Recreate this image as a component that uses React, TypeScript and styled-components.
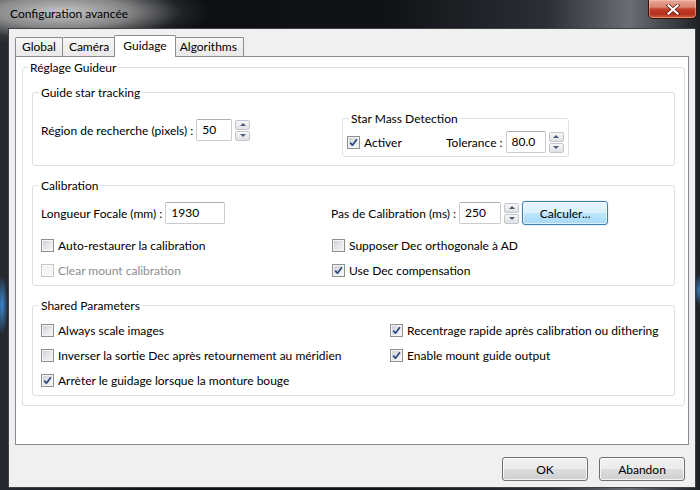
import React from "react";
import styled, { createGlobalStyle, css } from "styled-components";

const GlobalStyle = createGlobalStyle`
  html, body { margin: 0; padding: 0; background: #111317; }
  body {
    width: 700px; height: 490px; overflow: hidden;
    font-family: "Segoe UI", Lato, "Noto Sans", sans-serif;
    font-size: 12px; color: #000;
  }
  * { box-sizing: border-box; }
`;

const Window = styled.div`
  width: 700px;
  height: 490px;
  display: flex;
  flex-direction: column;
  background:
    radial-gradient(ellipse 150px 34px at 62px 12px, rgba(205,205,205,0.95) 0%, rgba(170,170,170,0.75) 45%, rgba(90,90,90,0.25) 80%, transparent 100%),
    radial-gradient(ellipse 6px 30px at 2px 305px, rgba(60,140,220,0.95), transparent),
    radial-gradient(ellipse 5px 16px at 699px 290px, rgba(60,140,220,0.8), transparent),
    linear-gradient(to right, #26292e 0%, #0d0f12 25%, #101216 55%, #2b2e33 78%, #6a6d72 90%, #34373c 97%, #1d1f23 100%);
`;

const TitleBar = styled.div`
  height: 28px;
  display: flex;
  align-items: flex-start;
  flex-shrink: 0;
`;

const TitleText = styled.div`
  margin: 6px 0 0 10px;
  font-size: 12px;
  line-height: 16px;
  color: #000;
`;

const CloseButton = styled.div`
  margin: 0 3px 0 auto;
  width: 49px;
  height: 19px;
  border: 1px solid #3b1008;
  border-top: none;
  border-radius: 0 0 5px 5px;
  background: linear-gradient(#e9a898 0%, #d98471 40%, #c1402a 50%, #b3301b 78%, #d4603f 100%);
  box-shadow: inset 0 0 0 1px rgba(255,210,200,0.45);
  display: flex;
  align-items: center;
  justify-content: center;
`;

const Client = styled.div`
  flex: 1;
  margin: 0 4px 2px 8px;
  border: 1px solid #3e4146;
  background: #f0f0f0;
  padding: 6px 6px 0 6px;
  display: flex;
  flex-direction: column;
`;

const TabStrip = styled.div`
  display: flex;
  align-items: flex-end;
  height: 21px;
  padding-left: 1px;
  position: relative;
  z-index: 1;
`;

const Tab = styled.div<{ $active?: boolean }>`
  height: 19px;
  padding: 0 6px;
  border: 1px solid #898c95;
  border-bottom: none;
  border-radius: 2px 2px 0 0;
  margin-left: -1px;
  background: linear-gradient(#f6f6f6, #e9e9e9);
  line-height: 17px;
  white-space: nowrap;
  ${(p) =>
    p.$active &&
    css`
      height: 22px;
      margin: 0 -2px -1px -2px;
      padding: 0 8px;
      background: #fff;
      line-height: 19px;
      position: relative;
      z-index: 2;
    `}
`;

const TabPanel = styled.div`
  height: 389px;
  border: 1px solid #898c95;
  background: #fff;
  padding: 3px 3px 0 6px;
`;

const Group = styled.fieldset<{ $pad: string; $width?: number }>`
  margin: 0;
  min-width: 0;
  border: 1px solid #dcdfe3;
  border-radius: 3px;
  padding: ${(p) => p.$pad};
  ${(p) => p.$width && css`width: ${p.$width}px;`}
`;

const Legend = styled.legend<{ $offset: number }>`
  padding: 0 2px;
  margin-left: ${(p) => p.$offset}px;
  line-height: 15px;
  font-size: 12px;
`;

const Stack = styled.div`
  display: flex;
  flex-direction: column;
  gap: 12px;
`;

const TrackingGrid = styled.div`
  display: grid;
  grid-template-columns: 301px auto;
  align-items: start;
`;

const FieldRow = styled.div<{ $mt?: number }>`
  display: flex;
  align-items: center;
  height: 22px;
  margin-top: ${(p) => p.$mt ?? 0}px;
`;

const Label = styled.span<{ $width?: number }>`
  white-space: nowrap;
  margin-right: 3px;
  ${(p) => p.$width && css`width: ${p.$width}px;`}
`;

const Field = styled.div<{ $w: number }>`
  width: ${(p) => p.$w}px;
  height: 22px;
  border: 1px solid #c9ccd1;
  border-top-color: #abadb3;
  border-radius: 2px;
  background: #fff;
  padding-left: 5px;
  line-height: 20px;
`;

const Spin = styled.div`
  display: flex;
  flex-direction: column;
  gap: 1px;
  margin-left: 3px;
  width: 15px;
`;

const SpinHalf = styled.div<{ $down?: boolean }>`
  height: 10px;
  border: 1px solid #c3c7cd;
  border-radius: 2px;
  background: linear-gradient(#f7f7f7, #dfe1e4);
  display: flex;
  align-items: center;
  justify-content: center;
  &::after {
    content: "";
    border-left: 3px solid transparent;
    border-right: 3px solid transparent;
    ${(p) =>
      p.$down
        ? css`border-top: 3px solid #4b5a78;`
        : css`border-bottom: 3px solid #4b5a78;`}
  }
`;

const CheckItem = styled.div<{ $width?: number; $disabled?: boolean }>`
  display: flex;
  align-items: center;
  gap: 4px;
  white-space: nowrap;
  color: ${(p) => (p.$disabled ? "#8d8d8d" : "#000")};
  ${(p) => p.$width && css`width: ${p.$width}px;`}
`;

const Box = styled.span<{ $disabled?: boolean }>`
  width: 13px;
  height: 13px;
  flex-shrink: 0;
  border: 1px solid ${(p) => (p.$disabled ? "#c5c5c5" : "#8e8f8f")};
  background: ${(p) =>
    p.$disabled
      ? "#f4f4f4"
      : "linear-gradient(135deg, #c9ccd2 0%, #e6e8eb 55%, #f9f9f9 100%)"};
  box-shadow: inset 0 0 0 1px ${(p) => (p.$disabled ? "#fbfbfb" : "#f4f4f4")};
  display: flex;
  align-items: center;
  justify-content: center;
`;

const CalGrid = styled.div<{ $cols: string }>`
  display: grid;
  grid-template-columns: ${(p) => p.$cols};
  grid-auto-rows: 25px;
  align-items: center;
`;

const CalTop = styled.div`
  display: grid;
  grid-template-columns: 290px auto;
  margin-bottom: 9px;
`;

const Button = styled.div<{ $focus?: boolean; $w: number }>`
  width: ${(p) => p.$w}px;
  height: 24px;
  border: 1px solid #707070;
  border-radius: 3px;
  background: linear-gradient(#f2f2f2 0%, #ebebeb 50%, #dddddd 50%, #cfcfcf 100%);
  box-shadow: inset 0 0 0 1px rgba(255,255,255,0.75);
  display: flex;
  align-items: center;
  justify-content: center;
  ${(p) =>
    p.$focus &&
    css`
      border-color: #3c7fb1;
      background: linear-gradient(#eaf6fd 0%, #d9f0fc 50%, #bee6fd 50%, #a7d9f5 100%);
      box-shadow: inset 0 0 0 1px rgba(255,255,255,0.6), 0 0 2px rgba(60,127,177,0.35);
    `}
`;

const Footer = styled.div`
  display: flex;
  justify-content: flex-end;
  gap: 11px;
  margin-top: 12px;
  padding-right: 4px;
`;

const Check = ({ on }: { on?: boolean }) =>
  on ? (
    <svg width="9" height="9" viewBox="0 0 9 9">
      <path d="M1.2 4.6 L3.4 7.2 L7.9 1.2" fill="none" stroke="#2c4680" strokeWidth="1.7" strokeLinejoin="round" />
    </svg>
  ) : null;

const CheckBox = ({
  label,
  on,
  disabled,
  width,
}: {
  label: string;
  on?: boolean;
  disabled?: boolean;
  width?: number;
}) => (
  <CheckItem $disabled={disabled} $width={width}>
    <Box $disabled={disabled}>
      <Check on={on} />
    </Box>
    {label}
  </CheckItem>
);

const Spinner = () => (
  <Spin>
    <SpinHalf />
    <SpinHalf $down />
  </Spin>
);

export default function App() {
  return (
    <Window>
      <GlobalStyle />
      <TitleBar>
        <TitleText>Configuration avancée</TitleText>
        <CloseButton>
          <svg width="14" height="11" viewBox="0 0 14 11">
            <path d="M2.5 1.5 L11.5 9.5 M11.5 1.5 L2.5 9.5" stroke="#5a1a10" strokeWidth="3.6" strokeLinecap="square" />
            <path d="M2.5 1.5 L11.5 9.5 M11.5 1.5 L2.5 9.5" stroke="#fff" strokeWidth="2.2" strokeLinecap="square" />
          </svg>
        </CloseButton>
      </TitleBar>
      <Client>
        <TabStrip>
          <Tab>Global</Tab>
          <Tab>Caméra</Tab>
          <Tab $active>Guidage</Tab>
          <Tab>Algorithms</Tab>
        </TabStrip>
        <TabPanel>
          <Group $pad="10px 9px 9px 9px">
            <Legend $offset={-4}>Réglage Guideur</Legend>
            <Stack>
              <Group $pad="11px 8px 8px 8px">
                <Legend $offset={-2}>Guide star tracking</Legend>
                <TrackingGrid>
                  <FieldRow $mt={8}>
                    <Label>Région de recherche (pixels) :</Label>
                    <Field $w={36}>50</Field>
                    <Spinner />
                  </FieldRow>
                  <Group $pad="5px 4px 3px 4px" $width={227}>
                    <Legend $offset={2}>Star Mass Detection</Legend>
                    <FieldRow>
                      <CheckBox label="Activer" on width={99} />
                      <Label>Tolerance :</Label>
                      <Field $w={40}>80.0</Field>
                      <Spinner />
                    </FieldRow>
                  </Group>
                </TrackingGrid>
              </Group>

              <Group $pad="9px 8px 2px 8px">
                <Legend $offset={-2}>Calibration</Legend>
                <CalTop>
                  <FieldRow>
                    <Label>Longueur Focale (mm) :</Label>
                    <Field $w={60}>1930</Field>
                  </FieldRow>
                  <FieldRow>
                    <Label>Pas de Calibration (ms) :</Label>
                    <Field $w={42}>250</Field>
                    <Spinner />
                    <Button $focus $w={86} style={{ marginLeft: 3 }}>Calculer...</Button>
                  </FieldRow>
                </CalTop>
                <CalGrid $cols="291px auto">
                  <CheckBox label="Auto-restaurer la calibration" />
                  <CheckBox label="Supposer Dec orthogonale à AD" />
                  <CheckBox label="Clear mount calibration" disabled />
                  <CheckBox label="Use Dec compensation" on />
                </CalGrid>
              </Group>

              <Group $pad="5px 8px 2px 8px">
                <Legend $offset={-2}>Shared Parameters</Legend>
                <CalGrid $cols="349px auto">
                  <CheckBox label="Always scale images" />
                  <CheckBox label="Recentrage rapide après calibration ou dithering" on />
                  <CheckBox label="Inverser la sortie Dec après retournement au méridien" />
                  <CheckBox label="Enable mount guide output" on />
                  <CheckBox label="Arrèter le guidage lorsque la monture bouge" on />
                </CalGrid>
              </Group>
            </Stack>
          </Group>
        </TabPanel>
        <Footer>
          <Button $w={86}>OK</Button>
          <Button $w={86}>Abandon</Button>
        </Footer>
      </Client>
    </Window>
  );
}
